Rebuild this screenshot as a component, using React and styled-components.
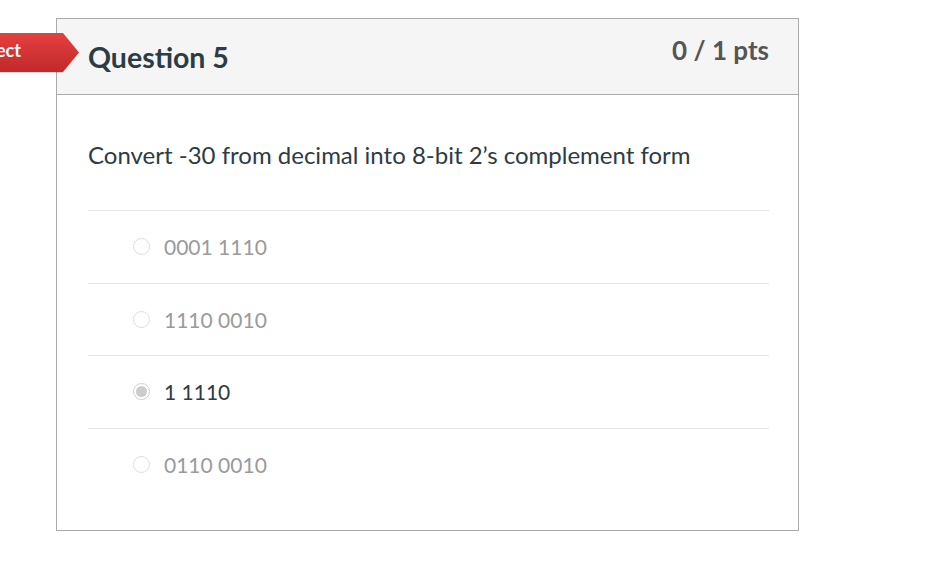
import styled, { createGlobalStyle } from "styled-components";

const GlobalStyle = createGlobalStyle`
  html, body {
    margin: 0;
    padding: 0;
    background: #ffffff;
    font-family: Lato, "Open Sans", sans-serif;
  }
`;

const answers = [
  { text: "0001 1110", selected: false },
  { text: "1110 0010", selected: false },
  { text: "1 1110", selected: true },
  { text: "0110 0010", selected: false },
];

export default function App() {
  return (
    <>
      <GlobalStyle />
      <Page>
        <Card>
          <Ribbon>
            <span>Incorrect</span>
          </Ribbon>
          <Header>
            <Title>Question 5</Title>
            <Points>0 / 1 pts</Points>
          </Header>
          <Body>
            <QuestionText>
              Convert -30 from decimal into 8-bit 2’s complement form
            </QuestionText>
            <Answers>
              {answers.map((a) => (
                <Answer key={a.text}>
                  <Radio $selected={a.selected} />
                  <AnswerText $selected={a.selected}>{a.text}</AnswerText>
                </Answer>
              ))}
            </Answers>
          </Body>
        </Card>
      </Page>
    </>
  );
}

const Page = styled.div`
  padding-top: 18px;
  padding-left: 56px;
  height: 567px;
  box-sizing: border-box;
  overflow: hidden;
  position: relative;
`;

const Card = styled.div`
  width: 743px;
  height: 513px;
  box-sizing: border-box;
  border: 1px solid #aaaaaa;
  background: #ffffff;
`;

const Ribbon = styled.div`
  position: absolute;
  top: 33px;
  left: 0;
  width: 63px;
  height: 39px;
  background: linear-gradient(#e3413f, #c1292a);
  box-shadow: 0 1px 1px rgba(0, 0, 0, 0.15);

  &::after {
    content: "";
    position: absolute;
    left: 63px;
    top: 0;
    width: 16px;
    height: 39px;
    background: linear-gradient(#e3413f, #c1292a);
    clip-path: polygon(0 0, 100% 50%, 0 100%);
  }

  span {
    position: absolute;
    right: 42px;
    top: 6px;
    color: #ffffff;
    font-weight: 700;
    font-size: 18px;
    white-space: nowrap;
  }
`;

const Header = styled.div`
  height: 76px;
  box-sizing: border-box;
  background: #f5f5f5;
  border-bottom: 1px solid #aaaaaa;
  display: flex;
  justify-content: space-between;
  align-items: flex-start;
  padding: 0 29px 0 31px;
`;

const Title = styled.h2`
  margin: 21px 0 0;
  font-size: 28.5px;
  font-weight: 700;
  color: #2d3b45;
`;

const Points = styled.div`
  margin-top: 15px;
  font-size: 26px;
  font-weight: 700;
  color: #555555;
`;

const Body = styled.div`
  padding: 0 29px 0 31px;
`;

const QuestionText = styled.p`
  margin: 44px 0 0;
  font-size: 24px;
  color: #2d3b45;
  line-height: 32px;
`;

const Answers = styled.div`
  margin-top: 39px;
`;

const Answer = styled.div`
  height: 72.5px;
  border-top: 1px solid #e6e6e6;
  display: flex;
  align-items: center;
  padding-left: 45px;
  box-sizing: border-box;
`;

const Radio = styled.span`
  width: 17px;
  height: 17px;
  box-sizing: border-box;
  border-radius: 50%;
  border: 1px solid ${(p) => (p.$selected ? "#cfcfcf" : "#dddddd")};
  background: #ffffff;
  display: inline-flex;
  align-items: center;
  justify-content: center;
  margin-right: 14px;

  &::after {
    content: "";
    width: 11px;
    height: 11px;
    border-radius: 50%;
    background: ${(p) => (p.$selected ? "#cccccc" : "transparent")};
  }
`;

const AnswerText = styled.span`
  font-size: 21px;
  color: ${(p) => (p.$selected ? "#2d3b45" : "#9a9a9a")};
`;
